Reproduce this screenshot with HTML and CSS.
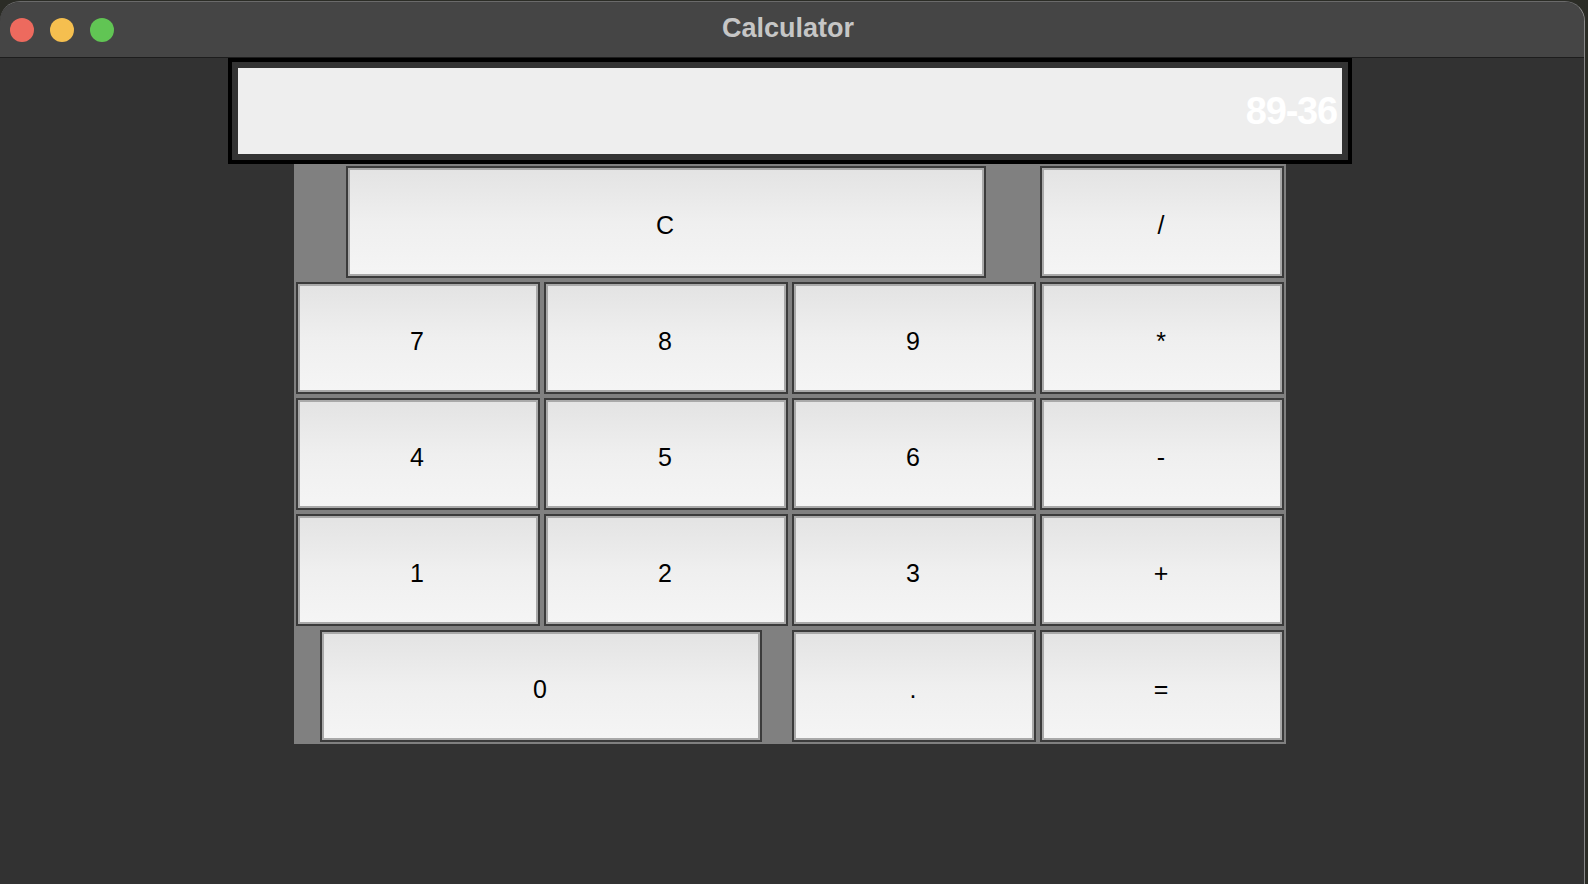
FILE: index.html
```html
<!DOCTYPE html>
<html>
<head>
<meta charset="utf-8">
<title>Calculator</title>
<link rel="stylesheet" href="styles.css">
</head>
<body>
<div class="window">
  <div class="titlebar">
    <div class="lights">
      <span class="light red"></span>
      <span class="light yellow"></span>
      <span class="light green"></span>
    </div>
    <div class="title">Calculator</div>
    <div class="spacer"></div>
  </div>
  <div class="content">
    <div class="display-frame">
      <div class="display">89-36</div>
    </div>
    <div class="keypad">
      <button class="key key-c">C</button>
      <button class="key">/</button>
      <button class="key">7</button>
      <button class="key">8</button>
      <button class="key">9</button>
      <button class="key">*</button>
      <button class="key">4</button>
      <button class="key">5</button>
      <button class="key">6</button>
      <button class="key">-</button>
      <button class="key">1</button>
      <button class="key">2</button>
      <button class="key">3</button>
      <button class="key">+</button>
      <button class="key key-0">0</button>
      <button class="key">.</button>
      <button class="key">=</button>
    </div>
  </div>
</div>
</body>
</html>
```

FILE: styles.css
```css
html, body {
  margin: 0;
  padding: 0;
}

body {
  width: 1588px;
  height: 884px;
  overflow: hidden;
  background: #2b2c26;
  font-family: "Liberation Sans", Arial, sans-serif;
}

.window {
  width: 1585px;
  height: 883px;
  margin-top: 1px;
  box-sizing: border-box;
  border-top: 1px solid #6a6a6a;
  border-right: 1px solid #8a8a8a;
  border-radius: 20px 20px 0 0;
  overflow: hidden;
  background: #323232;
}

.titlebar {
  height: 55px;
  background: #454545;
  border-bottom: 1px solid #1d1d1d;
  display: grid;
  grid-template-columns: 1fr auto 1fr;
  align-items: center;
}

.lights {
  display: flex;
  gap: 16px;
  padding-left: 10px;
  padding-top: 1px;
}

.light {
  width: 24px;
  height: 24px;
  border-radius: 50%;
  display: block;
}

.red { background: #ed6a5e; }
.yellow { background: #f5bf4f; }
.green { background: #61c554; }

.title {
  color: #c6c6c6;
  font-weight: bold;
  font-size: 27px;
  padding-right: 8px;
  padding-bottom: 3px;
}

.content {
  width: 1580px;
  display: flex;
  flex-direction: column;
  align-items: center;
}

.display-frame {
  width: 1124px;
  height: 106px;
  box-sizing: border-box;
  border: 4px solid #000;
}

.display {
  height: 98px;
  box-sizing: border-box;
  border: 6px solid #333333;
  background: #eeeeee;
  color: #ffffff;
  font-weight: bold;
  font-size: 38px;
  line-height: 86px;
  text-align: right;
  padding-right: 5px;
  letter-spacing: -1.2px;
}

.keypad {
  width: 992px;
  height: 580px;
  background: #808080;
  display: grid;
  grid-template-columns: repeat(4, 248px);
  grid-template-rows: repeat(5, 116px);
}

.key {
  margin: 2px;
  box-sizing: border-box;
  border: 2px solid #3b3b3b;
  box-shadow: inset 0 0 0 2px #a9a9a9;
  background: linear-gradient(to bottom, #e3e3e3 0%, #efefef 50%, #f5f5f5 100%);
  font-family: "Liberation Sans", Arial, sans-serif;
  font-size: 25px;
  color: #000;
  padding: 6px 2px 0 0;
  cursor: default;
}

.key-c {
  grid-column: 1 / span 3;
  width: 640px;
  justify-self: center;
}

.key-0 {
  grid-column: 1 / span 2;
  width: 442px;
  justify-self: center;
  margin-left: 1px;
  margin-right: 3px;
}
```
